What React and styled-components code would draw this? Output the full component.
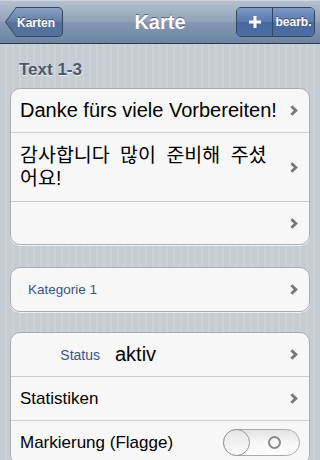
import styled, { createGlobalStyle } from 'styled-components';

const Global = createGlobalStyle`
  html, body {
    margin: 0;
    padding: 0;
  }
  body {
    width: 320px;
    height: 460px;
    overflow: hidden;
    font-family: "Liberation Sans", "Noto Sans CJK KR", Arial, sans-serif;
    background: repeating-linear-gradient(90deg, #c5ccd4 0 5px, #cbd2d8 5px 7px);
  }
`;

const Screen = styled.div`
  width: 320px;
  height: 460px;
  overflow: hidden;
`;

const NavBar = styled.div`
  height: 44px;
  box-sizing: border-box;
  display: grid;
  grid-template-columns: 1fr auto 1fr;
  align-items: center;
  padding: 0 5px;
  background: linear-gradient(#b4c0d0, #8fa2ba 50%, #8498b2 51%, #6d84a2);
  border-bottom: 1px solid #2d3642;
  border-top: 1px solid #cdd5df;
`;

const Title = styled.h1`
  margin: 0;
  font-size: 20px;
  font-weight: bold;
  color: #fff;
  text-shadow: 0 -1px 0 rgba(0, 0, 0, 0.45);
`;

const BackButton = styled.button`
  justify-self: start;
  position: relative;
  height: 30px;
  padding: 0 8px 0 12px;
  border: none;
  background: #34465f;
  border-radius: 0 5px 5px 0;
  clip-path: polygon(0 50%, 11px 0, 100% 0, 100% 100%, 11px 100%);
  cursor: pointer;

  &::before {
    content: '';
    position: absolute;
    inset: 1px;
    border-radius: 0 4px 4px 0;
    clip-path: polygon(0 50%, 10.3px 0, 100% 0, 100% 100%, 10.3px 100%);
    background: linear-gradient(#8aa0c0, #647fa7 50%, #54709b 51%, #55739e);
  }
`;

const ButtonLabel = styled.span`
  position: relative;
  font: bold 12px "Liberation Sans", Arial, sans-serif;
  color: #fff;
  text-shadow: 0 -1px 0 rgba(0, 0, 0, 0.45);
`;

const Segmented = styled.div`
  justify-self: end;
  display: flex;
  height: 30px;
  box-sizing: border-box;
  border: 1px solid #34465f;
  border-radius: 5px;
  overflow: hidden;
`;

const Segment = styled.button`
  width: ${p => p.$w}px;
  border: none;
  padding: 0;
  display: flex;
  align-items: center;
  justify-content: center;
  background: linear-gradient(#7d98c4, #5879ad 50%, #48699e 51%, #4b6ea4);
  & + & {
    border-left: 1px solid #2f4466;
  }
`;

const PlusIcon = () => (
  <svg width="14" height="14" viewBox="0 0 14 14">
    <path d="M7 1v12M1 7h12" stroke="#fff" strokeWidth="3" />
  </svg>
);

const Content = styled.div`
  padding: 16px 10px 0;
`;

const SectionTitle = styled.h2`
  margin: 0 0 8px 9px;
  height: 20px;
  line-height: 20px;
  font-size: 17px;
  font-weight: bold;
  color: #4c566c;
  text-shadow: 0 1px 0 rgba(255, 255, 255, 0.8);
`;

const Group = styled.div`
  background: #f7f7f7;
  border: 1px solid #a9adb1;
  border-radius: 10px;
  box-shadow: 0 1px 0 rgba(255, 255, 255, 0.7);
  overflow: hidden;
  margin-bottom: ${p => p.$gap || 0}px;
`;

const Row = styled.div`
  display: flex;
  align-items: center;
  min-height: ${p => p.$h || 43}px;
  padding: 0 11px 0 ${p => p.$indent || 9}px;
  & + & {
    border-top: 1px solid #cbcbcb;
  }
`;

const Label = styled.span`
  flex: 1;
  font-size: ${p => p.$size || 17}px;
  line-height: ${p => p.$lh || 21}px;
  word-spacing: ${p => p.$ws || 0}px;
  color: ${p => p.$muted ? '#385487' : '#000'};
  padding-right: ${p => p.$pr || 0}px;
`;

const FieldName = styled.span`
  width: 80px;
  text-align: right;
  font-size: 14px;
  color: #385487;
  margin-right: 15px;
`;

const Chevron = () => (
  <svg width="8" height="11" viewBox="0 0 8 11">
    <path d="M1.4 1.3 L5.8 5.5 L1.4 9.7" stroke="#777" strokeWidth="2.9" fill="none" />
  </svg>
);

const Switch = styled.div`
  position: relative;
  width: 77px;
  height: 27px;
  box-sizing: border-box;
  border: 1px solid #aaa;
  border-radius: 14px;
  background: linear-gradient(#e2e2e2, #f7f7f7 50%, #fdfdfd);
  margin-right: -2px;
`;

const Knob = styled.span`
  position: absolute;
  left: -1px;
  top: -1px;
  width: 27px;
  height: 27px;
  box-sizing: border-box;
  border-radius: 50%;
  border: 1px solid #959595;
  background: linear-gradient(#e6e6e6, #fbfbfb);
`;

const OffMark = styled.span`
  position: absolute;
  left: 44px;
  top: 6px;
  width: 13px;
  height: 13px;
  box-sizing: border-box;
  border-radius: 50%;
  border: 2px solid #8a8a8a;
`;

export default function App() {
  return (
    <Screen>
      <Global />
      <NavBar>
        <BackButton><ButtonLabel>Karten</ButtonLabel></BackButton>
        <Title>Karte</Title>
        <Segmented>
          <Segment $w={35}><PlusIcon /></Segment>
          <Segment $w={42}><ButtonLabel>bearb.</ButtonLabel></Segment>
        </Segmented>
      </NavBar>
      <Content>
        <SectionTitle>Text 1-3</SectionTitle>
        <Group $gap={22}>
          <Row $h={43}>
            <Label $size={20}>Danke fürs viele Vorbereiten!</Label>
            <Chevron />
          </Row>
          <Row $h={68}>
            <Label $size={19.5} $lh={23} $ws={5} $pr={10}>감사합니다 많이 준비해 주셨어요!</Label>
            <Chevron />
          </Row>
          <Row $h={42}>
            <Label />
            <Chevron />
          </Row>
        </Group>
        <Group $gap={20}>
          <Row $h={43} $indent={17}>
            <Label $size={13.5} $muted>Kategorie 1</Label>
            <Chevron />
          </Row>
        </Group>
        <Group>
          <Row $h={43}>
            <FieldName>Status</FieldName>
            <Label $size={20}>aktiv</Label>
            <Chevron />
          </Row>
          <Row $h={43}>
            <Label>Statistiken</Label>
            <Chevron />
          </Row>
          <Row $h={43}>
            <Label>Markierung (Flagge)</Label>
            <Switch>
              <Knob />
              <OffMark />
            </Switch>
          </Row>
        </Group>
      </Content>
    </Screen>
  );
}
